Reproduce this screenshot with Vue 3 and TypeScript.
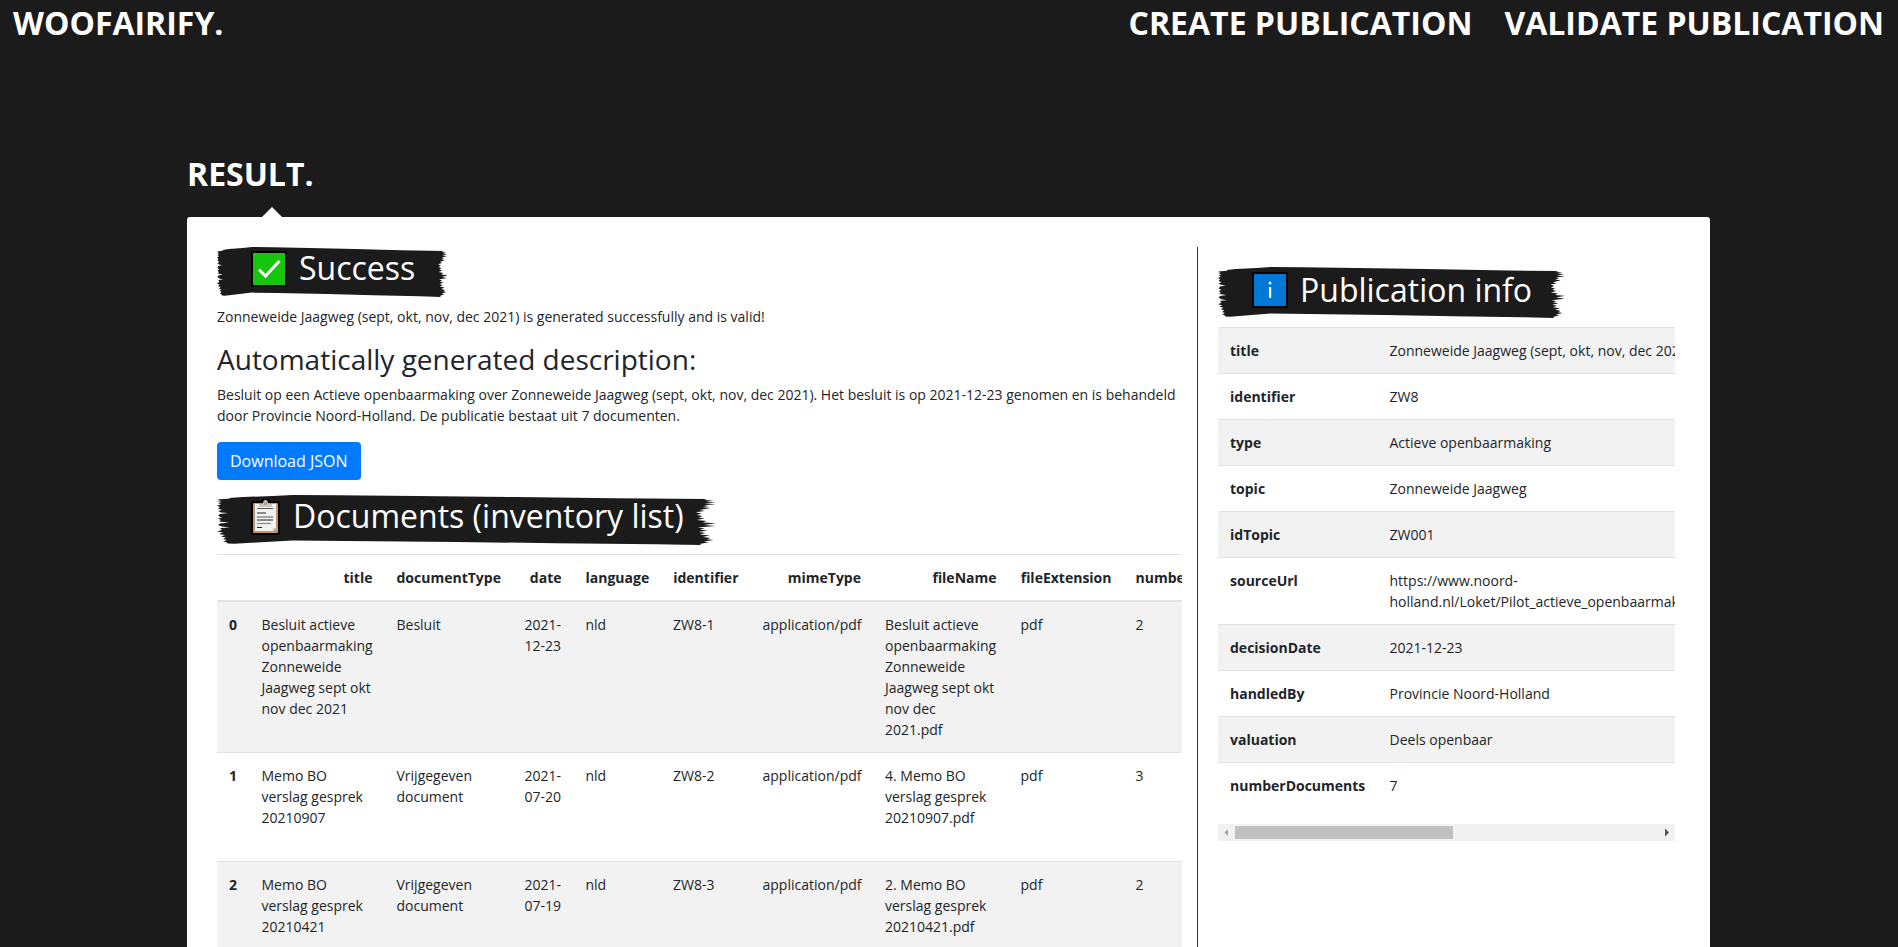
<script setup lang="ts">
type IconName = 'check' | 'clipboard' | 'info'

interface DocumentRow {
  title: string
  documentType: string
  date: string
  identifier: string
  fileName: string
  pages: number
}

const sections: Record<string, { icon: IconName; label: string }> = {
  success: { icon: 'check', label: 'Success' },
  documents: { icon: 'clipboard', label: 'Documents (inventory list)' },
  info: { icon: 'info', label: 'Publication info' },
}

const headers = [
  '', 'title', 'documentType', 'date', 'language', 'identifier',
  'mimeType', 'fileName', 'fileExtension', 'numberPages',
]

const rows: DocumentRow[] = [
  {
    title: 'Besluit actieve openbaarmaking Zonneweide Jaagweg sept okt nov dec 2021',
    documentType: 'Besluit',
    date: '2021-12-23',
    identifier: 'ZW8-1',
    fileName: 'Besluit actieve openbaarmaking Zonneweide Jaagweg sept okt nov dec 2021.pdf',
    pages: 2,
  },
  {
    title: 'Memo BO verslag gesprek 20210907',
    documentType: 'Vrijgegeven document',
    date: '2021-07-20',
    identifier: 'ZW8-2',
    fileName: '4. Memo BO verslag gesprek 20210907.pdf',
    pages: 3,
  },
  {
    title: 'Memo BO verslag gesprek 20210421',
    documentType: 'Vrijgegeven document',
    date: '2021-07-19',
    identifier: 'ZW8-3',
    fileName: '2. Memo BO verslag gesprek 20210421.pdf',
    pages: 2,
  },
]

const info: [string, string][] = [
  ['title', 'Zonneweide Jaagweg (sept, okt, nov, dec 2021)'],
  ['identifier', 'ZW8'],
  ['type', 'Actieve openbaarmaking'],
  ['topic', 'Zonneweide Jaagweg'],
  ['idTopic', 'ZW001'],
  ['sourceUrl', 'https://www.noord-holland.nl/Loket/Pilot_actieve_openbaarmaking'],
  ['decisionDate', '2021-12-23'],
  ['handledBy', 'Provincie Noord-Holland'],
  ['valuation', 'Deels openbaar'],
  ['numberDocuments', '7'],
]

// Brush stroke outline in a 500x50 box, stretched to each heading's width.
const brushPath =
  'M0 4.5 L4 5.2 L0 6 L5 7 L1 8 L4 9.5 L0 10.5 L3 12 L1 13.5 L5 15 L1 16 L4 17.5 L11 18 L3 19 L1 21 L5 22.5 L1 23.5 L4 25 L2 26.5 L12 27.5 L3 28.5 L1 30 L5 31.5 L13 32.5 L3 33 L5 35 L0 36.5 L6 37.5 L2 39 L8 40 L4 41.5 L9 42.5 L6 44 L10 45 L6 46.5 L9 47 L11 48.5 L17 48.7 ' +
  'L40 47.5 L76 45.6 L130 46 L240 47 L340 48.2 L440 49.3 L486 50 L484 49 L493 47.2 L488 46.5 L498 45 L491 44.3 L495 43 L487 42 L494 40.5 L484 39.5 L490 38 L483 37 L492 35.5 L484 34.8 L489 33.5 L482 32.5 L500 31 L488 30 L500 28.3 L487 27.5 L491 26 L481 25 L489 23.5 L483 22.5 L487 21 L481 20 L486 18.5 L480 17.3 L489 16 L484 15 L495 13 L487 12.3 L493 11 L488 10.3 L500 9.2 L489 8.3 L500 7.2 L490 6.2 L498 5.4 L488 5 L492 4 ' +
  'L400 3.2 L300 2 L200 1 L120 .2 L76 0 L56 1 L26 2 L12 3 L14 3.6 Z'
</script>

<template>
  <div class="page">
    <nav class="navbar">
      <a class="brand">WOOFAIRIFY.</a>
      <div class="links">
        <a>CREATE PUBLICATION</a>
        <a>VALIDATE PUBLICATION</a>
      </div>
    </nav>

    <main class="result">
      <h1 class="result-title">RESULT.</h1>
      <div class="card">
        <section class="main-col">
          <h2 class="brush">
            <svg class="stroke" viewBox="0 0 500 50" preserveAspectRatio="none"><path :d="brushPath" /></svg>
            <svg class="emoji" viewBox="0 0 36 36">
              <rect width="36" height="36" rx="1" fill="#000" />
              <rect x="2" y="2" width="32" height="32" fill="#16c60c" />
              <path d="M8 18.5 L14.5 25 L28.5 10" fill="none" stroke="#fff" stroke-width="3" />
            </svg>
            <span>{{ sections.success.label }}</span>
          </h2>
          <p class="message">Zonneweide Jaagweg (sept, okt, nov, dec 2021) is generated successfully and is valid!</p>
          <h3>Automatically generated description:</h3>
          <p class="description">
            Besluit op een Actieve openbaarmaking over Zonneweide Jaagweg (sept, okt, nov, dec 2021). Het besluit is op
            2021-12-23 genomen en is behandeld door Provincie Noord-Holland. De publicatie bestaat uit 7 documenten.
          </p>
          <button class="btn" type="button">Download JSON</button>
          <h2 class="brush brush-docs">
            <svg class="stroke" viewBox="0 0 500 50" preserveAspectRatio="none"><path :d="brushPath" /></svg>
            <svg class="emoji clip" viewBox="0 0 29 36">
              <path d="M2 2 H9 Q14 -2 20 2 H27 Q29 2 29 4 V33 Q29 36 27 36 H2 Q0 36 0 34 V4 Q0 2 2 2 Z" fill="#000" />
              <rect x="2" y="4" width="25" height="30" rx="1" fill="#c2956b" />
              <path d="M4 5 H25 V29 L22 32 H4 Z" fill="#f2f2f2" />
              <path d="M22 32 V29 H25 Z" fill="#cfcfcf" />
              <path d="M8 8 V5 H12 Q12 1 14.500 1 Q17 1 17 5 H21 V8 Z" fill="#c4c4c4" />
              <circle cx="14.500" cy="4.500" r="1.500" fill="#c2956b" />
              <g stroke-width="1.200">
                <path d="M6 9.500 H22 M6 18 H22" stroke="#555" />
                <path d="M6 14 H15 M6 21 H22 M6 28.500 H11" stroke="#222" />
                <path d="M6 24.500 H20" stroke="#888" />
              </g>
            </svg>
            <span>{{ sections.documents.label }}</span>
          </h2>
          <div class="table-clip">
            <table class="table docs">
              <colgroup>
                <col v-for="(h, i) in headers" :key="i" :class="'c' + i" />
              </colgroup>
              <thead>
                <tr><th v-for="(h, i) in headers" :key="i">{{ h }}</th></tr>
              </thead>
              <tbody>
                <tr v-for="(r, i) in rows" :key="r.identifier">
                  <th>{{ i }}</th>
                  <td>{{ r.title }}</td>
                  <td>{{ r.documentType }}</td>
                  <td>{{ r.date }}</td>
                  <td>nld</td>
                  <td>{{ r.identifier }}</td>
                  <td>application/pdf</td>
                  <td>{{ r.fileName }}</td>
                  <td>pdf</td>
                  <td>{{ r.pages }}</td>
                </tr>
              </tbody>
            </table>
          </div>
        </section>

        <aside class="side-col">
          <h2 class="brush">
            <svg class="stroke" viewBox="0 0 500 50" preserveAspectRatio="none"><path :d="brushPath" /></svg>
            <svg class="emoji" viewBox="0 0 36 36">
              <rect width="36" height="36" rx="1" fill="#000" />
              <rect x="2" y="2" width="32" height="32" fill="#0078d7" />
              <circle cx="18" cy="11" r="1.500" fill="#fff" />
              <rect x="17" y="15" width="2.200" height="11" fill="#fff" />
            </svg>
            <span>{{ sections.info.label }}</span>
          </h2>
          <div class="table-clip">
            <table class="table info">
              <tbody>
                <tr v-for="[key, value] in info" :key="key">
                  <th>{{ key }}</th>
                  <td>{{ value }}</td>
                </tr>
              </tbody>
            </table>
          </div>
          <div class="scrollbar">
            <svg viewBox="0 0 17 17"><path d="M10 5 V12 L6.500 8.500 Z" fill="#a3a3a3" /></svg>
            <div class="track"><div class="thumb"></div></div>
            <svg viewBox="0 0 17 17"><path d="M7 4.500 V12.500 L11 8.500 Z" fill="#505050" /></svg>
          </div>
        </aside>
      </div>
    </main>
  </div>
</template>

<style>
html,
body {
  margin: 0;
  background: #1b1b1b;
  overflow: hidden;
}
</style>

<style scoped>
.page {
  box-sizing: border-box;
  height: 947px;
  overflow: hidden;
  background: #1b1b1b;
  color: #212529;
  font: 14px/21px 'Open Sans', 'Noto Sans', sans-serif;
}
.page *,
.page *::before {
  box-sizing: border-box;
}
.navbar {
  display: flex;
  justify-content: space-between;
  padding: 0 14px 0 13px;
  color: #fff;
  font-size: 32px;
  font-weight: 700;
  line-height: 46px;
}
.links {
  display: flex;
  gap: 32px;
}
.result {
  width: 1523px;
  margin: 104px 0 0 187px;
}
.result-title {
  margin: 0;
  color: #fff;
  font-size: 32px;
  font-weight: 700;
  line-height: 48px;
}
.card {
  position: relative;
  display: flex;
  height: 800px;
  margin-top: 19px;
  padding: 30px 35px 0 30px;
  border-radius: 3px;
  background: #fff;
}
.card::before {
  content: '';
  position: absolute;
  top: -10px;
  left: 75px;
  border: solid transparent;
  border-width: 0 10px 10px;
  border-bottom-color: #fff;
}
.main-col {
  width: 965px;
  margin-right: 15px;
}
.side-col {
  width: 478px;
  padding: 20px 0 0 20px;
  border-left: 1px solid #343434;
}
.brush {
  position: relative;
  display: flex;
  align-items: center;
  width: max-content;
  height: 50px;
  margin: 0;
  padding: 0 32px 0 34px;
  color: #fff;
  font-size: 32px;
  font-weight: 400;
  line-height: 38px;
}
.brush span {
  position: relative;
  top: -4px;
  white-space: nowrap;
}
.side-col .brush {
  height: 51px;
}
.side-col .brush span {
  top: -3px;
}
.stroke {
  position: absolute;
  inset: 0;
  width: 100%;
  height: 100%;
  fill: #1b1b1b;
}
.emoji {
  position: relative;
  top: -3px;
  width: 36px;
  height: 36px;
  margin-right: 12px;
}
.clip {
  width: 29px;
  margin-right: 13px;
}
.brush-docs {
  margin-top: 15px;
}
.message {
  margin: 9px 0 16px;
}
h3 {
  margin: 0 0 8px;
  font-size: 28px;
  font-weight: 400;
  line-height: 33px;
}
.description {
  margin: 0 0 16px;
}
.btn {
  display: block;
  height: 38px;
  padding: 0 13px;
  border: 0;
  border-radius: 4px;
  background: #007bff;
  color: #fff;
  font: 16px/24px 'Open Sans', 'Noto Sans', sans-serif;
  white-space: nowrap;
}
.table-clip {
  margin-top: 9px;
  overflow: hidden;
}
.table {
  table-layout: fixed;
  border-collapse: separate;
  border-spacing: 0;
}
.table th,
.table td {
  padding: 12px;
  border-top: 1px solid #dee2e6;
  text-align: left;
  vertical-align: top;
}
.table tbody tr:nth-child(odd) {
  background: #f2f2f2;
}
.docs {
  width: 1016px;
}
.docs thead th {
  text-align: right;
  border-bottom: 2px solid #dee2e6;
}
.docs tbody tr:first-child > * {
  border-top: 0;
}
.docs tbody tr:nth-child(n + 2) {
  height: 109px;
}
.c0 { width: 32.500px; }
.c1 { width: 135px; }
.c2 { width: 128px; }
.c3 { width: 61px; }
.c4 { width: 87.500px; }
.c5 { width: 89.500px; }
.c6 { width: 122.500px; }
.c7 { width: 135.500px; }
.c8 { width: 115px; }
.c9 { width: 109.500px; }
.info {
  width: 560px;
}
.info th {
  width: 159.500px;
}
.scrollbar {
  display: flex;
  height: 17px;
  margin-top: 16px;
  background: #f1f1f1;
}
.scrollbar svg {
  width: 17px;
  height: 17px;
}
.track {
  flex: 1;
  padding: 2px 0;
}
.thumb {
  width: 218px;
  height: 13px;
  background: #c1c1c1;
}
</style>
